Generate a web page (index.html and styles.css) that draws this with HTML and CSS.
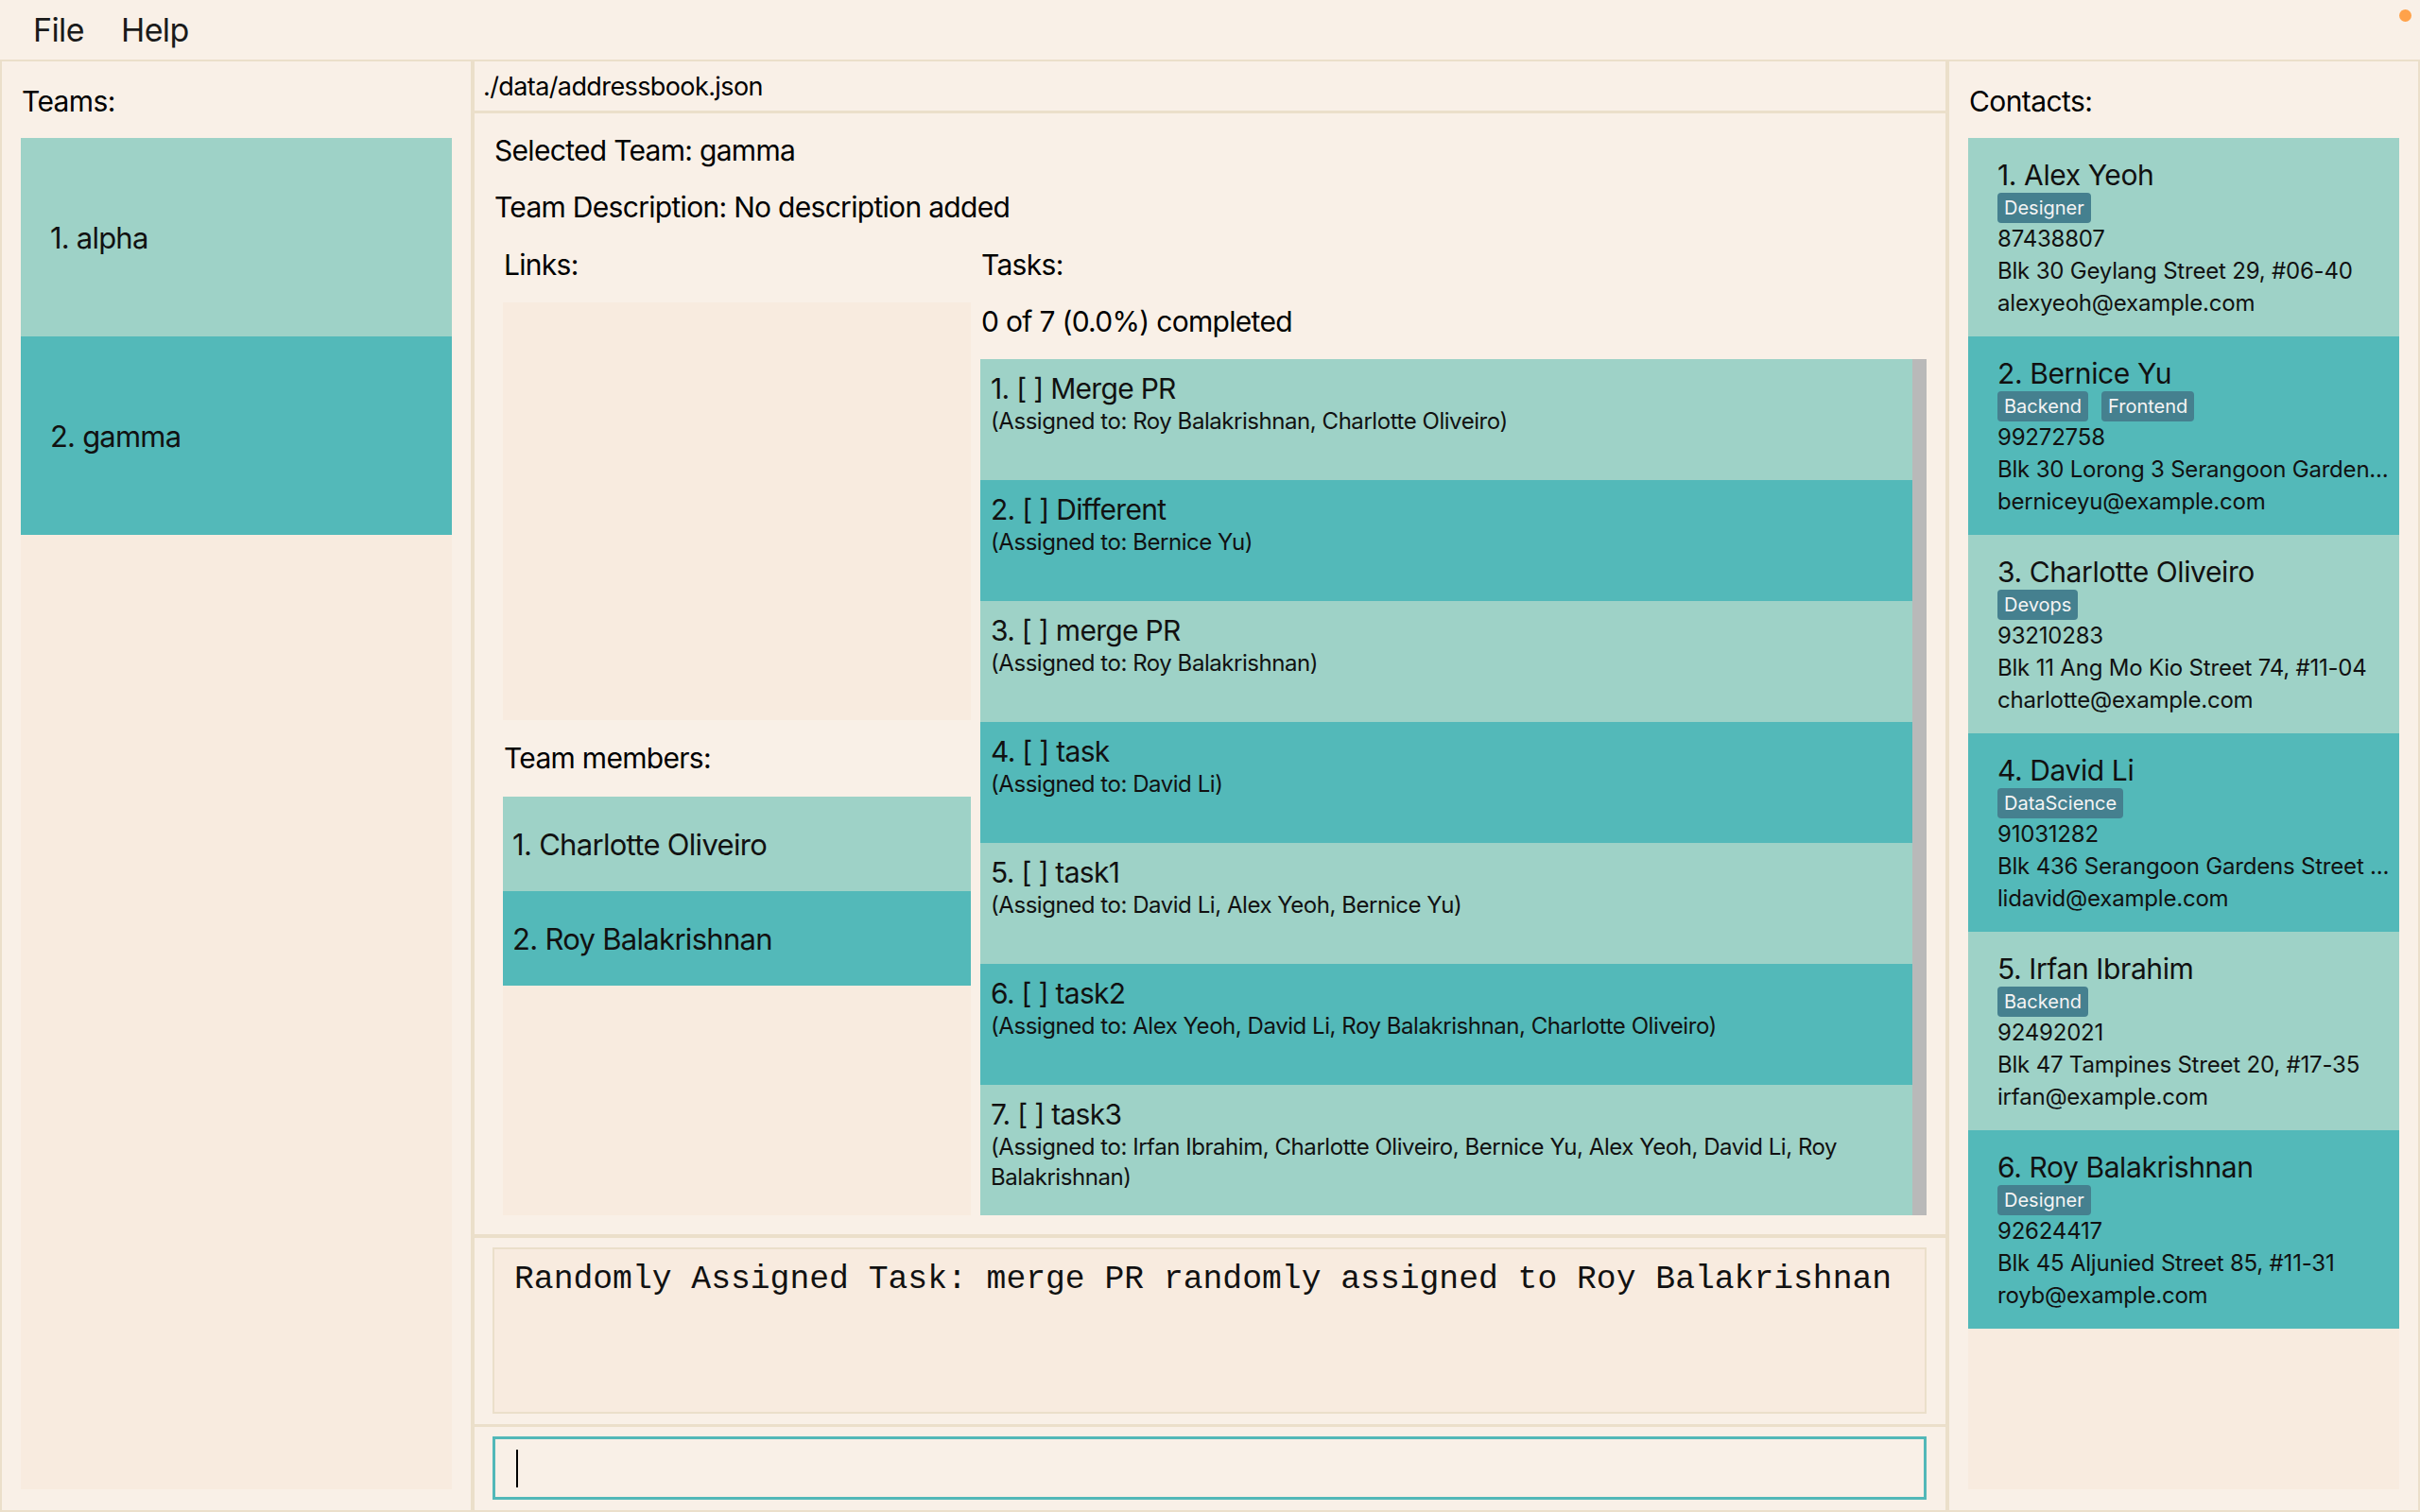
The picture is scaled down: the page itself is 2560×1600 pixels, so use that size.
FILE: index.html
```html
<!DOCTYPE html>
<html lang="en">
<head>
<meta charset="utf-8">
<title>Address Book</title>
<link rel="stylesheet" href="styles.css">
</head>
<body>
<div class="app">
  <div class="menubar">
    <span class="menu-item">File</span>
    <span class="menu-item">Help</span>
  </div>
  <span class="dot"></span>
  <div class="main">
    <section class="panel side">
      <div class="panel-title">Teams:</div>
      <div class="list">
        <div class="team-item light">1. alpha</div>
        <div class="team-item dark">2. gamma</div>
      </div>
    </section>

    <section class="panel center">
      <div class="status">./data/addressbook.json</div>
      <div class="team-view">
        <div class="line">Selected Team: gamma</div>
        <div class="line gap">Team Description: No description added</div>
        <div class="columns">
          <div class="col-left">
            <div class="label">Links:</div>
            <div class="links-box"></div>
            <div class="label members-label">Team members:</div>
            <div class="members">
              <div class="member light">1. Charlotte Oliveiro</div>
              <div class="member dark">2. Roy Balakrishnan</div>
            </div>
          </div>
          <div class="col-right">
            <div class="label">Tasks:</div>
            <div class="label progress">0 of 7 (0.0%) completed</div>
            <div class="tasks">
              <div class="task-list">
                <div class="task light"><div class="task-title">1. [ ] Merge PR</div><div class="task-assign">(Assigned to: Roy Balakrishnan, Charlotte Oliveiro)</div></div>
                <div class="task dark"><div class="task-title">2. [ ] Different</div><div class="task-assign">(Assigned to: Bernice Yu)</div></div>
                <div class="task light"><div class="task-title">3. [ ] merge PR</div><div class="task-assign">(Assigned to: Roy Balakrishnan)</div></div>
                <div class="task dark"><div class="task-title">4. [ ] task</div><div class="task-assign">(Assigned to: David Li)</div></div>
                <div class="task light"><div class="task-title">5. [ ] task1</div><div class="task-assign">(Assigned to: David Li, Alex Yeoh, Bernice Yu)</div></div>
                <div class="task dark"><div class="task-title">6. [ ] task2</div><div class="task-assign">(Assigned to: Alex Yeoh, David Li, Roy Balakrishnan, Charlotte Oliveiro)</div></div>
                <div class="task light"><div class="task-title">7. [ ] task3</div><div class="task-assign">(Assigned to: Irfan Ibrahim, Charlotte Oliveiro, Bernice Yu, Alex Yeoh, David Li, Roy Balakrishnan)</div></div>
              </div>
              <div class="scrollbar"></div>
            </div>
          </div>
        </div>
      </div>
      <div class="result-section">
        <div class="result-box">Randomly Assigned Task: merge PR randomly assigned to Roy Balakrishnan</div>
      </div>
      <div class="command-section">
        <div class="command-box"><span class="caret"></span></div>
      </div>
    </section>

    <section class="panel side">
      <div class="panel-title contacts-title">Contacts:</div>
      <div class="list">
        <div class="contact light">
          <div class="c-name">1. Alex Yeoh</div>
          <div class="tags"><span class="tag">Designer</span></div>
          <div class="c-line">87438807</div>
          <div class="c-line">Blk 30 Geylang Street 29, #06-40</div>
          <div class="c-line">alexyeoh@example.com</div>
        </div>
        <div class="contact dark">
          <div class="c-name">2. Bernice Yu</div>
          <div class="tags"><span class="tag">Backend</span><span class="tag">Frontend</span></div>
          <div class="c-line">99272758</div>
          <div class="c-line">Blk 30 Lorong 3 Serangoon Garden...</div>
          <div class="c-line">berniceyu@example.com</div>
        </div>
        <div class="contact light">
          <div class="c-name">3. Charlotte Oliveiro</div>
          <div class="tags"><span class="tag">Devops</span></div>
          <div class="c-line">93210283</div>
          <div class="c-line">Blk 11 Ang Mo Kio Street 74, #11-04</div>
          <div class="c-line">charlotte@example.com</div>
        </div>
        <div class="contact dark">
          <div class="c-name">4. David Li</div>
          <div class="tags"><span class="tag">DataScience</span></div>
          <div class="c-line">91031282</div>
          <div class="c-line">Blk 436 Serangoon Gardens Street ...</div>
          <div class="c-line">lidavid@example.com</div>
        </div>
        <div class="contact light">
          <div class="c-name">5. Irfan Ibrahim</div>
          <div class="tags"><span class="tag">Backend</span></div>
          <div class="c-line">92492021</div>
          <div class="c-line">Blk 47 Tampines Street 20, #17-35</div>
          <div class="c-line">irfan@example.com</div>
        </div>
        <div class="contact dark">
          <div class="c-name">6. Roy Balakrishnan</div>
          <div class="tags"><span class="tag">Designer</span></div>
          <div class="c-line">92624417</div>
          <div class="c-line">Blk 45 Aljunied Street 85, #11-31</div>
          <div class="c-line">royb@example.com</div>
        </div>
      </div>
    </section>
  </div>
</div>
</body>
</html>
```

FILE: styles.css
```css
* { box-sizing: border-box; }

html, body {
  margin: 0;
  padding: 0;
  background: #f9f0e7;
}

body {
  font-family: "Inter", "Noto Sans", sans-serif;
  color: #111;
}

.app {
  position: relative;
  width: 2560px;
  height: 1600px;
  display: flex;
  flex-direction: column;
  background: #f9f0e7;
  overflow: hidden;
}

.menubar {
  height: 63px;
  display: flex;
  align-items: center;
  gap: 39px;
  padding-left: 35px;
  font-size: 34px;
  letter-spacing: -0.6px;
  color: #1a1a1a;
}

.dot {
  position: absolute;
  top: 10px;
  left: 2538px;
  width: 13px;
  height: 13px;
  border-radius: 50%;
  background: #ffa24a;
}

.main {
  flex: 1;
  display: flex;
  min-height: 0;
}

.panel {
  border: 2px solid #ebdfca;
  display: flex;
  flex-direction: column;
  min-height: 0;
}

.side {
  width: 500px;
  padding: 24px 20px 22px 20px;
}

.panel-title {
  font-size: 30px;
  line-height: 36px;
  letter-spacing: -0.6px;
  color: #000;
  margin: 0 0 21px 1px;
}

.list {
  flex: 1;
  background: #f8ebdf;
  overflow: hidden;
}

.light { background: #9ed2c7; }
.dark { background: #53b9b9; }

.team-item {
  height: 210px;
  display: flex;
  align-items: center;
  padding-left: 31px;
  font-size: 31px;
  letter-spacing: -0.8px;
  color: #111;
}

/* center panel */
.center {
  width: 1560px;
  padding: 0;
}

.status {
  height: 55px;
  border-bottom: 3px solid #ebdfca;
  display: flex;
  align-items: center;
  padding-left: 9px;
  font-size: 27px;
  letter-spacing: -0.6px;
  color: #000;
}

.team-view {
  flex: 1;
  min-height: 0;
  display: flex;
  flex-direction: column;
  padding: 21px 20px 20px 21px;
}

.line {
  font-size: 30px;
  line-height: 36px;
  letter-spacing: -0.7px;
  color: #000;
}

.line.gap { margin-top: 24px; }

.columns {
  flex: 1;
  min-height: 0;
  margin-top: 25px;
  padding-left: 9px;
  display: flex;
  gap: 10px;
}

.col-left {
  width: 495px;
  display: flex;
  flex-direction: column;
}

.col-right {
  flex: 1;
  min-width: 0;
  display: flex;
  flex-direction: column;
}

.label {
  font-size: 30px;
  line-height: 36px;
  letter-spacing: -0.7px;
  color: #000;
  padding-left: 1px;
}

.col-left .label { padding-left: 1px; }

.links-box {
  height: 442px;
  margin-top: 22px;
  background: #f8ebdf;
}

.members-label { margin-top: 22px; }

.members {
  flex: 1;
  margin-top: 23px;
  background: #f8ebdf;
}

.member {
  height: 100px;
  display: flex;
  align-items: center;
  padding-left: 10px;
  font-size: 31px;
  letter-spacing: -0.7px;
  color: #111;
}

.progress { margin-top: 24px; }

.tasks {
  flex: 1;
  min-height: 0;
  margin-top: 22px;
  display: flex;
}

.task-list {
  flex: 1;
  min-width: 0;
  overflow: hidden;
  display: flex;
  flex-direction: column;
}

.scrollbar {
  width: 15px;
  background: #b9b9b9;
}

.task {
  flex: none;
  min-height: 128px;
  padding: 12px 11px;
  color: #111;
}

.task:last-child { flex: 1 0 auto; }

.task-title {
  font-size: 30px;
  line-height: 38px;
  letter-spacing: -0.7px;
}

.task-assign {
  font-size: 24px;
  line-height: 32px;
  letter-spacing: -0.45px;
}

.result-section {
  border-top: 4px solid #ebdfca;
  padding: 10px 20px 11px 19px;
}

.result-box {
  height: 176px;
  border: 2px solid #ebdfca;
  background: #f8ebdf;
  padding: 12px 21px;
  font-family: "Liberation Mono", "DejaVu Sans Mono", monospace;
  font-size: 34.7px;
  line-height: 40px;
  color: #111;
  white-space: pre;
}

.command-section {
  border-top: 3px solid #ebdfca;
  padding: 10px 20px 11px 19px;
}

.command-box {
  height: 67px;
  border: 3px solid #52b8b8;
  background: #f9f0e7;
  display: flex;
  align-items: center;
  padding-left: 22px;
}

.caret {
  width: 2px;
  height: 40px;
  background: #000;
}

/* contacts */
.contacts-title { margin-left: 1px; }

.contact {
  height: 210px;
  padding: 21px 20px 0 31px;
  color: #111;
}

.c-name {
  font-size: 30px;
  line-height: 36px;
  letter-spacing: -0.4px;
  white-space: nowrap;
}

.tags {
  display: flex;
  gap: 14px;
  margin-top: 1px;
  height: 32px;
}

.tag {
  height: 32px;
  line-height: 32px;
  padding: 0 7px;
  border-radius: 4px;
  background: #45808f;
  color: #f4f4f4;
  font-size: 20px;
}

.c-line {
  font-size: 24px;
  line-height: 34px;
  letter-spacing: -0.2px;
  white-space: nowrap;
}
```
